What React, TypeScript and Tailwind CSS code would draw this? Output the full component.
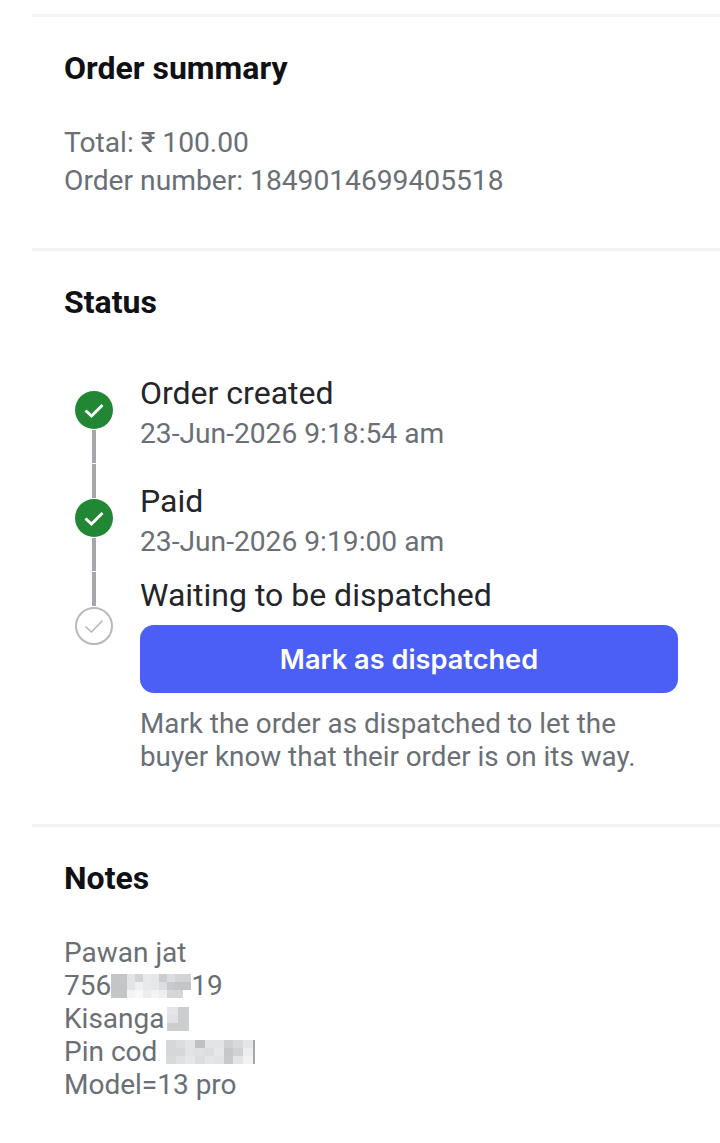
import React from 'react';

const Divider = () => <div className="ml-8 h-[3px] bg-[#f3f3f3]" />;

const Heading = ({ children }: { children: React.ReactNode }) => (
  <h2 className="text-[32px] leading-[38px] font-bold text-[#0f1114]">{children}</h2>
);

const Tick = ({ done }: { done: boolean }) =>
  done ? (
    <div className="flex h-[38px] w-[38px] items-center justify-center rounded-full bg-[#218735]">
      <svg width="22" height="22" viewBox="0 0 22 22" fill="none">
        <path d="M2.5 11.5 L8.5 17 L19.5 6" stroke="#fff" strokeWidth="3" />
      </svg>
    </div>
  ) : (
    <div className="flex h-[38px] w-[38px] items-center justify-center rounded-full border-2 border-[#b9b9b9] bg-white">
      <svg width="24" height="24" viewBox="0 0 24 24" fill="none">
        <path d="M3.5 12.5 L9.5 18 L20.5 6.5" stroke="#b4b4b4" strokeWidth="1.5" />
      </svg>
    </div>
  );

const Connector = () => (
  <div className="my-px flex h-[68px] w-1 flex-col justify-center gap-px">
    <div className="h-[33px] bg-[#a6a7ac]" />
    <div className="h-[34px] bg-[#a6a7ac]" />
  </div>
);

// pixelated redactions from the screenshot
const Blur = ({ cols, cells }: { cols: string; cells: string[] }) => (
  <span className={`inline-grid align-middle ${cols}`}>
    {cells.map((c, i) => (
      <span key={i} className={`h-2 ${c}`} />
    ))}
  </span>
);

export default function App() {
  return (
    <div className="h-[1143px] w-[720px] overflow-hidden bg-white font-['Roboto',sans-serif]">
      <div className="pt-[14px]">
        <Divider />
      </div>

      <section className="pl-16 pt-[32px] pb-[48px]">
        <Heading>Order summary</Heading>
        <div className="mt-[37px] text-[28.2px] leading-[38px] text-[#6a6f76]">
          <p>Total: ₹ 100.00</p>
          <p>Order number: 1849014699405518</p>
        </div>
      </section>

      <Divider />

      <section className="pl-16 pt-[32px] pr-[42px] pb-[51px]">
        <Heading>Status</Heading>
        <div className="mt-[52px] flex">
          <div className="ml-[11px] mt-[18px] flex flex-col items-center">
            <Tick done />
            <Connector />
            <Tick done />
            <Connector />
            <Tick done={false} />
          </div>
          <div className="ml-[27px] flex-1">
            <p className="text-[32px] leading-[40px] text-[#23252a]">Order created</p>
            <p className="pt-px text-[28.2px] leading-[40px] text-[#6a6f76]">23-Jun-2026 9:18:54 am</p>
            <p className="mt-[27px] text-[32px] leading-[40px] text-[#23252a]">Paid</p>
            <p className="pt-px text-[28.2px] leading-[40px] text-[#6a6f76]">23-Jun-2026 9:19:00 am</p>
            <p className="mt-[13px] text-[32px] leading-[40px] text-[#23252a]">Waiting to be dispatched</p>
            <button className="mt-[10px] h-[68px] w-full rounded-[14px] bg-[#4b5ef6] pt-[2px] font-['Inter',sans-serif] text-[27.2px] font-semibold text-white">
              Mark as dispatched
            </button>
            <p className="mt-[14px] text-[27.8px] leading-[33px] text-[#6a6f76]">
              Mark the order as dispatched to let the
              <br />
              buyer know that their order is on its way.
            </p>
          </div>
        </div>
      </section>

      <Divider />

      <section className="pl-16 pt-[32px]">
        <Heading>Notes</Heading>
        <div className="mt-[39px] text-[28px] leading-[33px] text-[#6a6f76]">
          <p>Pawan jat</p>
          <p className="flex items-center">
            756
            <Blur
              cols="grid-cols-[repeat(10,8px)]"
              cells={[
                'bg-[#c4c5c7]', 'bg-[#c4c5c7]', 'bg-[#e3e4e5]', 'bg-[#d2d3d5]', 'bg-[#e8e9ea]', 'bg-[#e6e7e8]', 'bg-[#cbcccf]', 'bg-[#dcdde0]', 'bg-[#d3d4d6]', 'bg-[#d3d4d6]',
                'bg-[#c4c5c7]', 'bg-[#c4c5c7]', 'bg-[#e3e4e5]', 'bg-[#f0f0f0]', 'bg-[#e8e9ea]', 'bg-[#e6e7e8]', 'bg-[#dcdde0]', 'bg-[#c8c9cb]', 'bg-[#c4c5c7]', 'bg-[#c4c5c7]',
                'bg-[#c4c5c7]', 'bg-[#c4c5c7]', 'bg-[#f4f4f4]', 'bg-[#f8f8f8]', 'bg-[#ededee]', 'bg-[#f3f3f3]', 'bg-[#eeeeee]', 'bg-[#d5d6d8]', 'bg-[#d5d6d8]', 'bg-white',
              ]}
            />
            19
          </p>
          <p className="flex items-center">
            Kisanga
            <Blur
              cols="ml-[3px] grid-cols-[repeat(2,11px)]"
              cells={['bg-[#e3e4e5]', 'bg-[#cccdcf]', 'bg-[#e0e1e2]', 'bg-[#cccdcf]', 'bg-[#cccdcf]', 'bg-[#cccdcf]']}
            />
          </p>
          <p className="flex items-center">
            Pin cod
            <Blur
              cols="ml-[9px] grid-cols-[repeat(9,9.6px)_2px]"
              cells={[
                'bg-[#d6d7d9]', 'bg-[#dcdde0]', 'bg-[#e3e4e5]', 'bg-[#c0c1c3]', 'bg-[#e3e4e5]', 'bg-[#e3e4e5]', 'bg-[#cfd0d2]', 'bg-[#d8d9db]', 'bg-[#e4e5e6]', 'bg-[#a5a6a8]',
                'bg-[#d6d7d9]', 'bg-[#d6d7d9]', 'bg-[#e1e2e3]', 'bg-[#dfe0e1]', 'bg-[#dcdde0]', 'bg-[#e6e7e8]', 'bg-[#c6c7c9]', 'bg-[#d0d1d3]', 'bg-[#ecedee]', 'bg-[#a5a6a8]',
                'bg-[#d8d9db]', 'bg-[#e0e1e2]', 'bg-[#e6e7e8]', 'bg-[#dcdde0]', 'bg-[#e4e5e6]', 'bg-[#e2e3e4]', 'bg-[#c8c9cb]', 'bg-[#e3e4e5]', 'bg-[#f3f3f3]', 'bg-[#a5a6a8]',
              ]}
            />
          </p>
          <p>Model=13 pro</p>
        </div>
      </section>
    </div>
  );
}
